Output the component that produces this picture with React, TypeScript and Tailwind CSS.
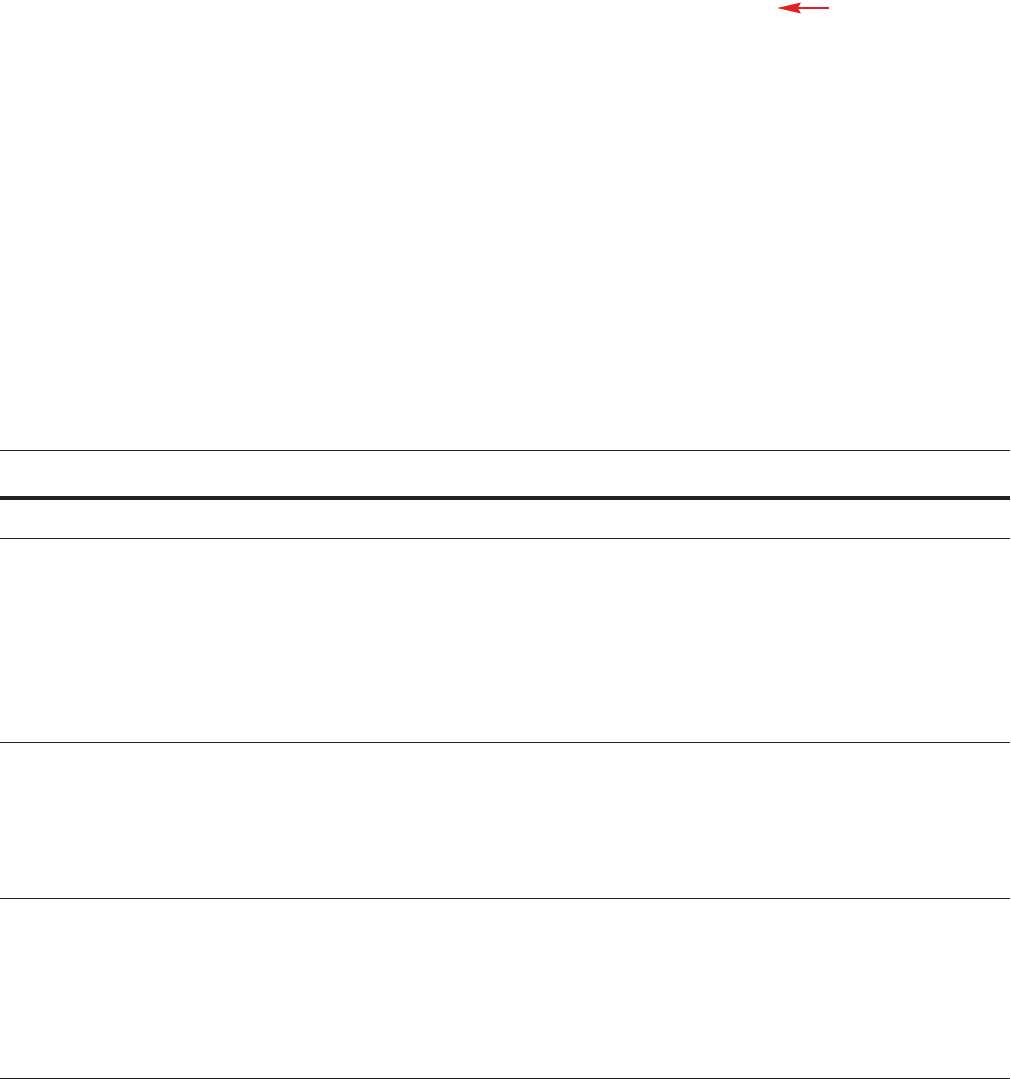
const Arrow = () => (
  <svg width="52" height="14" viewBox="0 0 52 14">
    <polygon points="0,7 24,1.5 21,7 24,12.5" fill="#e31e25" />
    <rect x="20" y="6" width="32" height="2" fill="#e31e25" />
  </svg>
);

const rows = [
  { h: "h-[49px]", border: "border-b-4" },
  { h: "h-[39px]", border: "border-b" },
  { h: "h-[204px]", border: "border-b" },
  { h: "h-[156px]", border: "border-b" },
  { h: "h-[180px]", border: "border-b" },
];

export default function App() {
  return (
    <div className="w-[1011px] h-[1079px] bg-white overflow-hidden">
      <div className="w-[1010px] h-[451px] border-b border-[#231f20] pt-[1px] pl-[777px]">
        <Arrow />
      </div>
      {rows.map((row, i) => (
        <div key={i} className={`w-[1010px] ${row.h} ${row.border} border-[#231f20]`} />
      ))}
    </div>
  );
}
